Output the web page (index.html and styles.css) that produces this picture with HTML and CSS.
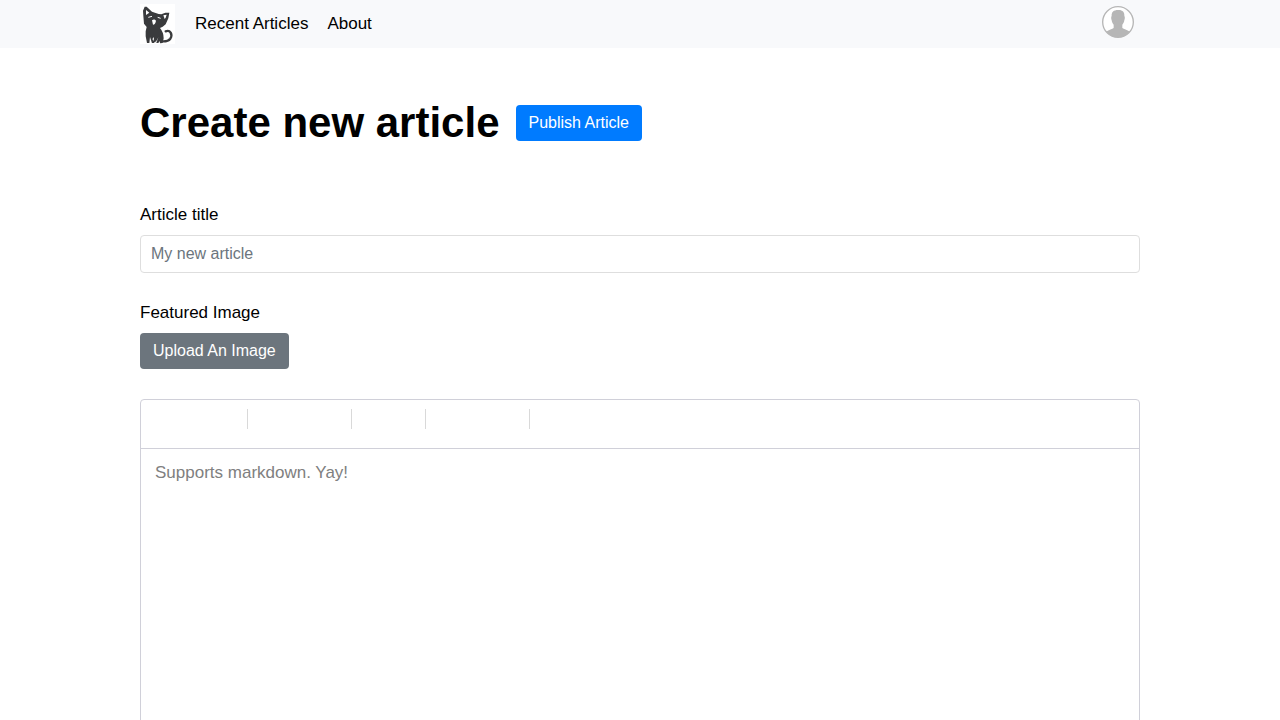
FILE: index.html
```html
<!DOCTYPE html>
<html lang="en">
<head>
<meta charset="utf-8">
<meta name="viewport" content="width=device-width, initial-scale=1">
<title>Create new article</title>
<link rel="stylesheet" href="styles.css">
</head>
<body>
<header class="site-header">
  <div class="container header-inner">
    <a class="logo" href="#" aria-label="Home">
      <svg viewBox="0 0 105 120" aria-hidden="true">
        <rect width="105" height="120" fill="#fff"/>
        <path fill="#3a3b3d" d="M14 8 L20 8 L36 23 L56 30 L64 31 L76 26 L88 26 L85 43 L77 61 L68 68 L60 72 Q71 85 71 103 L68 117 L60 118 L59 111 L55 117 L48 117 L46 112 L42 117 L21 117 L17 97 L17 82 L20 69 L12 59 L10 35 L9 20 Z"/>
        <path fill="none" stroke="#3a3b3d" stroke-width="7" stroke-linecap="round" d="M77 82 Q87 78 92 86 Q97 95 91 104 Q84 113 67 112"/>
        <path fill="#fff" d="M18 18 L28 26 L18 33 Z M70 34 L80 32 L77 41 L74 45 Z M36 49 Q43 43 48 50 Q46 62 39 62 Z M30 99 L36 118 L28 118 Z M42 99 L41 111 L37 105 Z M55 100 L48 119 L44 119 L52 106 Z"/>
        <path fill="none" stroke="#fff" stroke-width="3" d="M25 40 L36 37 M53 40 L62 43"/>
      </svg>
    </a>
    <nav class="nav">
      <a href="#">Recent Articles</a>
      <a href="#">About</a>
    </nav>
    <button class="avatar" type="button" aria-label="Account">
      <svg viewBox="0 0 96 96" aria-hidden="true">
        <circle cx="48" cy="48" r="46" fill="#fff" stroke="#b6b6b6" stroke-width="4"/>
        <path fill="#b6b6b6" d="M48 12 C61 11 68 18 67 30 C69 32 69 37 67 43 C66 49 64 53 61 56 V66 C65 70 75 71 84 77 Q69 94 48 94 Q27 94 12 77 C21 71 31 70 35 66 V56 C32 53 30 49 29 43 C27 37 27 32 29 30 C28 18 35 12 48 12 Z"/>
      </svg>
    </button>
  </div>
</header>
<main class="container">
  <form class="article-form">
    <div class="page-heading">
      <h1>Create new article</h1>
      <button class="btn btn-primary" type="submit">Publish Article</button>
    </div>
    <div class="field">
      <label for="title">Article title</label>
      <input class="text-input" id="title" type="text" placeholder="My new article">
    </div>
    <div class="field">
      <label for="upload">Featured Image</label>
      <button class="btn btn-secondary" id="upload" type="button">Upload An Image</button>
    </div>
    <div class="editor">
      <div class="toolbar" role="toolbar" aria-label="Formatting">
        <button type="button" aria-label="Bold"></button>
        <button type="button" aria-label="Italic"></button>
        <button type="button" aria-label="Heading"></button>
        <i class="separator"></i>
        <button type="button" aria-label="Quote"></button>
        <button type="button" aria-label="Bulleted list"></button>
        <button type="button" aria-label="Numbered list"></button>
        <i class="separator"></i>
        <button type="button" aria-label="Link"></button>
        <button type="button" aria-label="Image"></button>
        <i class="separator"></i>
        <button type="button" aria-label="Preview"></button>
        <button type="button" aria-label="Side by side"></button>
        <button type="button" aria-label="Fullscreen"></button>
        <i class="separator"></i>
        <button type="button" aria-label="Guide"></button>
      </div>
      <textarea class="editor-text" aria-label="Article body" placeholder="Supports markdown. Yay!"></textarea>
    </div>
  </form>
</main>
</body>
</html>
```
FILE: styles.css
```css
* {
  box-sizing: border-box;
}

body {
  margin: 0;
  background: #fff;
  color: #000;
  font-family: "Liberation Sans", Arial, sans-serif;
  font-size: 17px;
  line-height: 26px;
}

button,
input,
textarea {
  font: inherit;
}

.container {
  width: 100%;
  max-width: 1040px;
  margin: 0 auto;
  padding: 0 20px;
}

.site-header {
  background: #f8f9fb;
}

.header-inner {
  display: flex;
  align-items: center;
  height: 48px;
}

.logo,
.logo svg,
.avatar svg {
  display: block;
}

.logo svg {
  width: 35px;
  height: 40px;
}

.nav {
  display: flex;
  gap: 19px;
  margin-left: 20px;
}

.nav a {
  color: #000;
  text-decoration: none;
}

.avatar {
  align-self: flex-start;
  width: 32px;
  height: 32px;
  margin: 6px 6px 0 auto;
  padding: 0;
  border: 0;
  background: none;
}

.page-heading {
  display: flex;
  align-items: center;
  gap: 16px;
  padding: 48px 0 52px;
}

h1 {
  margin: 0;
  font-size: 42px;
  line-height: 54px;
}

.btn {
  display: block;
  height: 36px;
  padding: 0 13px;
  border: 0;
  border-radius: 4px;
  color: #fff;
  font-size: 16px;
  line-height: 36px;
}

.btn-primary {
  background: #007bff;
}

.btn-secondary {
  background: #6c757d;
}

.field {
  margin-bottom: 27px;
}

.field label {
  display: block;
  margin-bottom: 7px;
}

.field + .editor {
  margin-top: 30px;
}

.text-input {
  display: block;
  width: 100%;
  height: 38px;
  padding: 0 10px;
  border: 1px solid #dedede;
  border-radius: 4px;
  background: #fff;
  font-size: 16px;
}

.text-input::placeholder {
  color: #6c757d;
  opacity: 1;
}

.editor {
  border: 1px solid #d0d0d9;
  border-radius: 4px;
}

.toolbar {
  display: flex;
  height: 49px;
  padding: 9px 10px;
  border-bottom: 1px solid #d0d0d9;
}

.toolbar button {
  width: 30px;
  height: 30px;
  padding: 0;
  border: 0;
  background: none;
}

.separator {
  width: 2px;
  height: 20px;
  margin: 0 6px;
  border-left: 1px solid #d9d9d9;
}

.editor-text {
  display: block;
  width: 100%;
  height: 320px;
  padding: 11px 14px;
  border: 0;
  background: none;
  resize: none;
}

.editor-text::placeholder {
  color: #808080;
  opacity: 1;
}
```
